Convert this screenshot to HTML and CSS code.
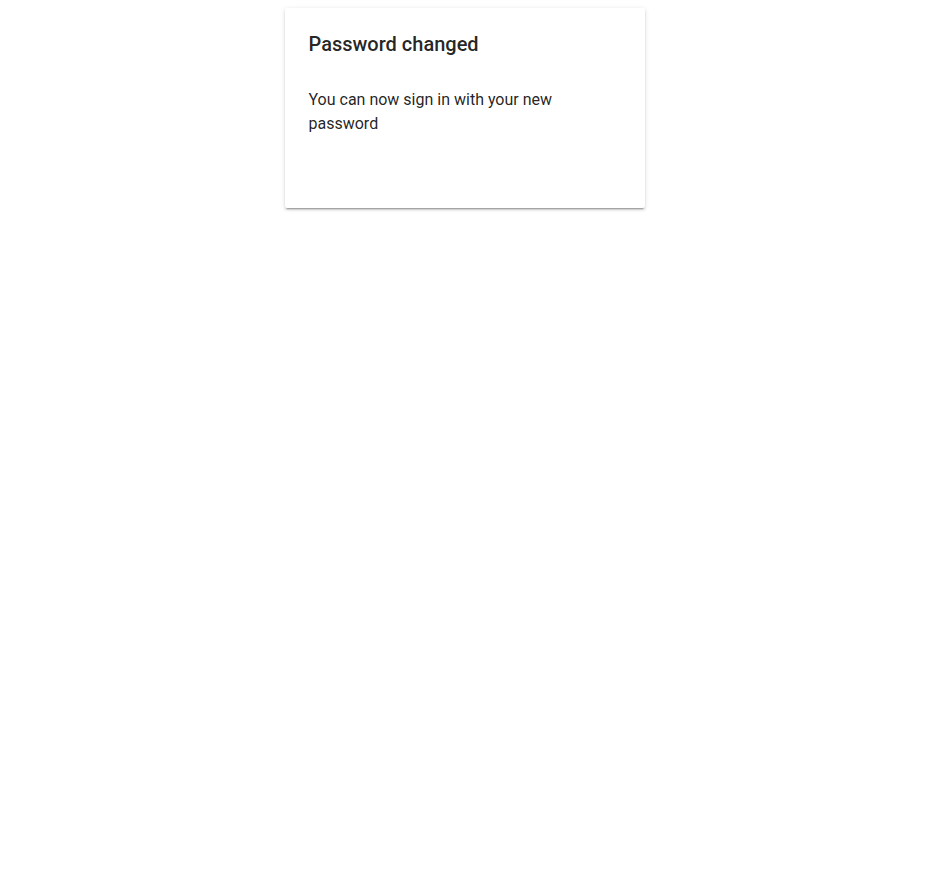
FILE: index.html
```html
<!DOCTYPE html>
<html>
<head>
<meta charset="utf-8">
<link rel="stylesheet" href="styles.css">
</head>
<body>
<main class="page">
  <div class="card">
    <h2 class="card-title">Password changed</h2>
    <p class="card-text">You can now sign in with your new password</p>
  </div>
</main>
</body>
</html>
```

FILE: styles.css
```css
html, body {
  background: #fff;
}
body {
  margin: 0;
  font-family: Roboto, "Noto Sans", sans-serif;
  color: rgba(0, 0, 0, 0.87);
}
.page {
  box-sizing: border-box;
  min-height: 100vh;
  padding: 8px;
}
.card {
  box-sizing: border-box;
  width: 360px;
  height: 200px;
  margin: 0 auto;
  padding: 24px;
  background: #fff;
  border-radius: 2px;
  box-shadow: 0 3px 1px -2px rgba(0, 0, 0, 0.2), 0 2px 2px 0 rgba(0, 0, 0, 0.14), 0 1px 5px 0 rgba(0, 0, 0, 0.12);
}
.card-title {
  margin: 0 0 32px;
  font-size: 20px;
  font-weight: 500;
  line-height: 24px;
}
.card-text {
  margin: 0;
  font-size: 16px;
  line-height: 24px;
  padding-right: 60px;
}
```
